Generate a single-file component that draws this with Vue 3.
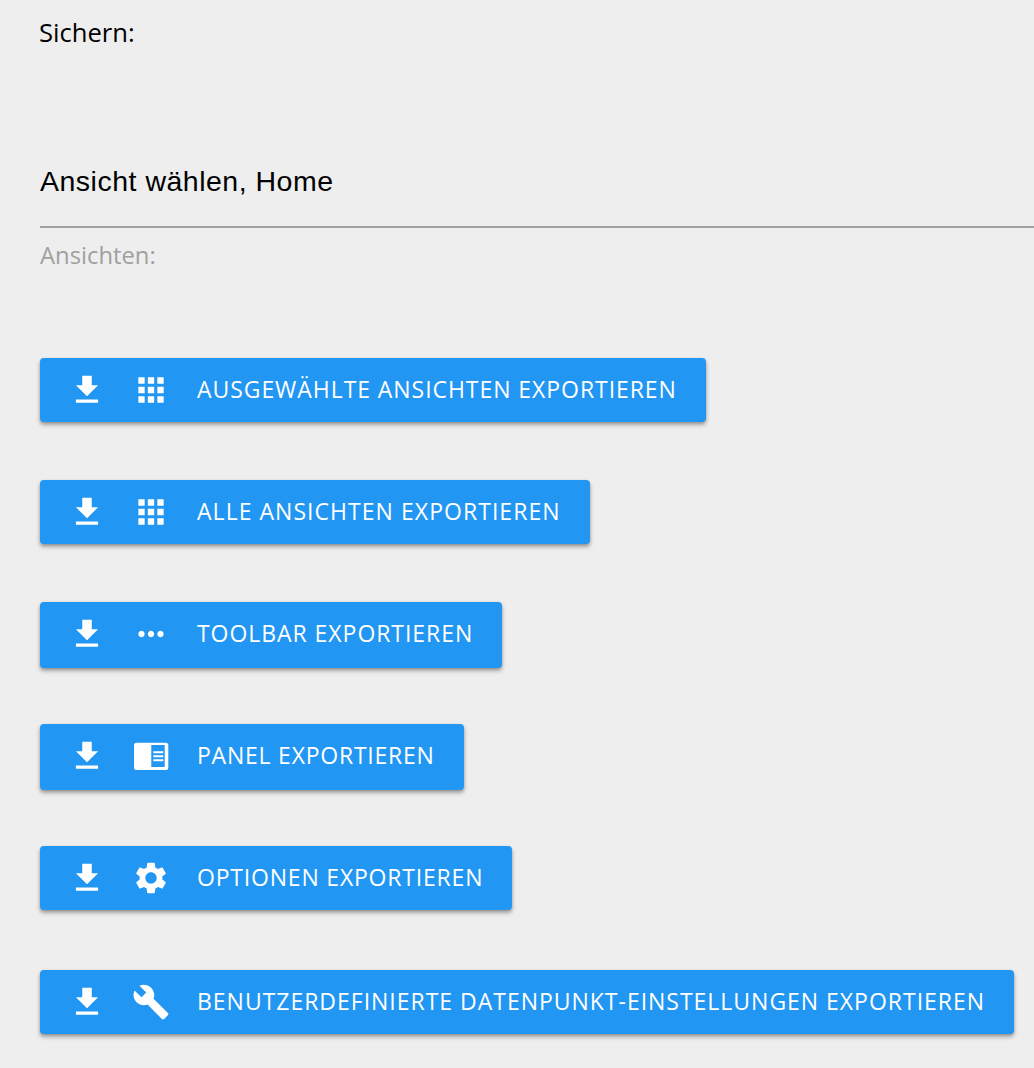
<template>
  <div class="page">
    <div class="section-title">Sichern:</div>
    <div class="select">
      <div class="select-value">Ansicht wählen, Home</div>
      <div class="select-label">Ansichten:</div>
    </div>
    <div class="buttons">
      <div v-for="b in buttons" :key="b.label" class="row" :class="{ last: b.last }">
        <button class="btn" :class="{ tall: b.tall }">
          <svg class="icon" viewBox="0 0 24 24"><path :d="downloadIcon" /></svg>
          <svg v-if="b.icon !== 'panel'" class="icon" viewBox="0 0 24 24"><path :d="icons[b.icon]" /></svg>
          <svg v-else class="icon" viewBox="0 0 38 38">
            <path transform="translate(0 1)" fill-rule="evenodd" d="M4.500 4.700h29.300a2.500 2.500 0 0 1 2.500 2.500v22.300a2.500 2.500 0 0 1-2.500 2.500h-29.300a2.500 2.500 0 0 1-2.500-2.500v-22.300a2.500 2.500 0 0 1 2.500-2.500zM19.300 7v22h13.400v-22zM21.300 13.300h10v2h-10zM21.300 17.300h10v2h-10zM21.300 21.300h10v2h-10z" />
          </svg>
          <span class="label" :style="{ letterSpacing: b.spacing + 'px' }">{{ b.label }}</span>
        </button>
      </div>
    </div>
  </div>
</template>

<script setup>
const downloadIcon = 'M19 9h-4V3H9v6H5l7 7 7-7zM5 18v2h14v-2H5z'

const icons = {
  apps: 'M4 8h4V4H4v4zm6 12h4v-4h-4v4zm-6 0h4v-4H4v4zm0-6h4v-4H4v4zm6 0h4v-4h-4v4zm6-10v4h4V4h-4zm-6 4h4V4h-4v4zm6 6h4v-4h-4v4zm0 6h4v-4h-4v4z',
  more: 'M6 10c-1.100 0-2 .9-2 2s.9 2 2 2 2-.9 2-2-.9-2-2-2zm12 0c-1.100 0-2 .9-2 2s.9 2 2 2 2-.9 2-2-.9-2-2-2zm-6 0c-1.100 0-2 .9-2 2s.9 2 2 2 2-.9 2-2-.9-2-2-2z',
  settings: 'M19.140 12.940c.04-.3.06-.61.06-.94 0-.32-.02-.64-.07-.94l2.030-1.580c.18-.14.23-.41.12-.61l-1.920-3.320c-.12-.22-.37-.29-.59-.22l-2.390.96c-.5-.38-1.030-.7-1.620-.94l-.36-2.540c-.04-.24-.24-.41-.48-.41h-3.840c-.24 0-.43.17-.47.41l-.36 2.540c-.59.24-1.130.57-1.620.94l-2.390-.96c-.22-.08-.47 0-.59.22L2.740 8.870c-.12.21-.08.47.12.61l2.030 1.580c-.05.3-.09.63-.09.94s.02.64.07.94l-2.030 1.580c-.18.14-.23.41-.12.61l1.920 3.320c.12.22.37.29.59.22l2.390-.96c.5.38 1.030.7 1.620.94l.36 2.540c.05.24.24.41.48.41h3.840c.24 0 .44-.17.47-.41l.36-2.540c.59-.24 1.130-.56 1.620-.94l2.390.96c.22.08.47 0 .59-.22l1.920-3.320c.12-.22.07-.47-.12-.61l-2.010-1.580zM12 15.600c-1.980 0-3.600-1.620-3.600-3.600s1.620-3.600 3.600-3.600 3.600 1.620 3.600 3.600-1.620 3.600-3.600 3.600z',
  build: 'M22.700 19l-9.100-9.100c.9-2.300.4-5-1.500-6.900-2-2-5-2.400-7.400-1.300L9 6 6 9 1.600 4.700C.4 7.100.9 10.100 2.900 12.100c1.900 1.900 4.600 2.400 6.900 1.500l9.100 9.100c.4.4 1 .4 1.400 0l2.300-2.300c.5-.4.5-1.100.1-1.400z'
}

const buttons = [
  { label: 'Ausgewählte Ansichten exportieren', icon: 'apps', spacing: 0.94 },
  { label: 'Alle Ansichten exportieren', icon: 'apps', spacing: 1.04 },
  { label: 'Toolbar exportieren', icon: 'more', tall: true, spacing: 0.95 },
  { label: 'Panel exportieren', icon: 'panel', tall: true, spacing: 0.77 },
  { label: 'Optionen exportieren', icon: 'settings', spacing: 0.8 },
  { label: 'Benutzerdefinierte Datenpunkt-Einstellungen exportieren', icon: 'build', last: true, spacing: 0.98 }
]
</script>

<style scoped>
.page {
  width: 1034px;
  height: 1068px;
  box-sizing: border-box;
  padding: 16px 0 0 40px;
  background-color: #eeeeee;
  overflow: hidden;
  font-family: "Open Sans", sans-serif;
}

.section-title {
  margin-left: -1px;
  font-size: 25.600px;
  line-height: 34px;
  color: #000;
}

.select {
  margin-top: 111px;
}

.select-value {
  height: 67px;
  box-sizing: border-box;
  border-bottom: 2px solid #a0a0a0;
  font-family: "Liberation Sans", sans-serif;
  font-size: 28.500px;
  letter-spacing: 0.5px;
  line-height: 40px;
  color: #000;
}

.select-label {
  margin-top: 11px;
  font-size: 23.800px;
  font-weight: 500;
  line-height: 32px;
  color: #a0a0a0;
}

.buttons {
  margin-top: 87px;
}

.row {
  height: 122px;
}

.row.last {
  margin-top: 2px;
}

.btn {
  display: flex;
  align-items: center;
  height: 64px;
  padding: 0 29px 0 28px;
  gap: 26px;
  border: none;
  border-radius: 4px;
  background-color: #2196f3;
  color: #fff;
  box-shadow: 0 3px 4px rgba(0, 0, 0, 0.3), 0 1px 3px rgba(0, 0, 0, 0.15);
  font-family: "Open Sans", sans-serif;
  font-size: 23px;
  cursor: pointer;
}

.btn.tall {
  height: 66px;
  padding-bottom: 2px;
}

.icon {
  width: 38px;
  height: 38px;
  flex-shrink: 0;
  fill: #fff;
}

.label {
  padding: 0 0 3px 1px;
  font-weight: 500;
  white-space: nowrap;
  text-transform: uppercase;
}
</style>
